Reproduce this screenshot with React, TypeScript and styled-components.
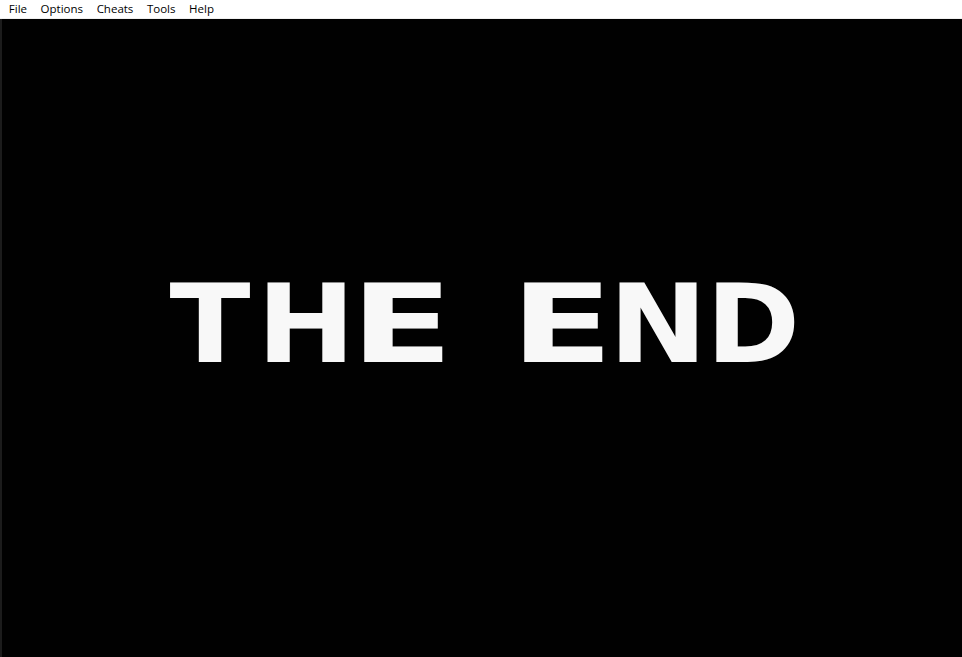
import React from "react";
import styled, { createGlobalStyle } from "styled-components";

const Global = createGlobalStyle`
  html, body { margin: 0; padding: 0; background: #000; }
  body { width: 962px; height: 657px; overflow: hidden; }
`;

const Window = styled.div`
  width: 962px;
  height: 657px;
  display: flex;
  flex-direction: column;
  background: #000;
`;

const MenuBar = styled.nav`
  height: 18px;
  flex: 0 0 18px;
  display: flex;
  align-items: center;
  background: #fff;
  border-bottom: 1px solid #f0f0f0;
  padding-left: 2px;
`;

const MenuItem = styled.span`
  font-family: "Open Sans", "Noto Sans", "Liberation Sans", sans-serif;
  font-size: 11.5px;
  color: #000;
  padding: 0 6.8px;
  line-height: 18px;
`;

const Screen = styled.main`
  flex: 1;
  background: #010101;
  border-left: 2px solid #1c1c1c;
  display: flex;
  align-items: flex-start;
  padding-top: 266px;
  padding-left: 168px;
`;

const Title = styled.div`
  display: flex;
  gap: 16px;
`;

const Glyph = styled.span<{ $sx: number; $dx?: number }>`
  display: flex;
  justify-content: center;
  width: 80px;
  height: 80px;
  font-family: "DejaVu Sans", sans-serif;
  font-weight: 700;
  font-size: 109px;
  line-height: 80px;
  white-space: nowrap;
  color: #f8f8f8;
  transform: translateX(${(p) => p.$dx ?? 0}px) scaleX(${(p) => p.$sx});
  transform-origin: center;
`;

const Gap = styled.span`
  display: block;
  width: 48px;
`;

const letters: { ch: string; sx: number; dx?: number }[] = [
  { ch: "T", sx: 1.09 },
  { ch: "H", sx: 1.08 },
  { ch: "E", sx: 1.38 },
  { ch: " ", sx: 1 },
  { ch: "E", sx: 1.38 },
  { ch: "N", sx: 1.08 },
  { ch: "D", sx: 1.04, dx: -1 },
];

export default function App() {
  return (
    <>
      <Global />
      <Window>
        <MenuBar>
          {["File", "Options", "Cheats", "Tools", "Help"].map((m) => (
            <MenuItem key={m}>{m}</MenuItem>
          ))}
        </MenuBar>
        <Screen>
          <Title aria-label="THE END">
            {letters.map((l, i) =>
              l.ch === " " ? (
                <Gap key={i} />
              ) : (
                <Glyph key={i} $sx={l.sx} $dx={l.dx}>
                  {l.ch}
                </Glyph>
              )
            )}
          </Title>
        </Screen>
      </Window>
    </>
  );
}
